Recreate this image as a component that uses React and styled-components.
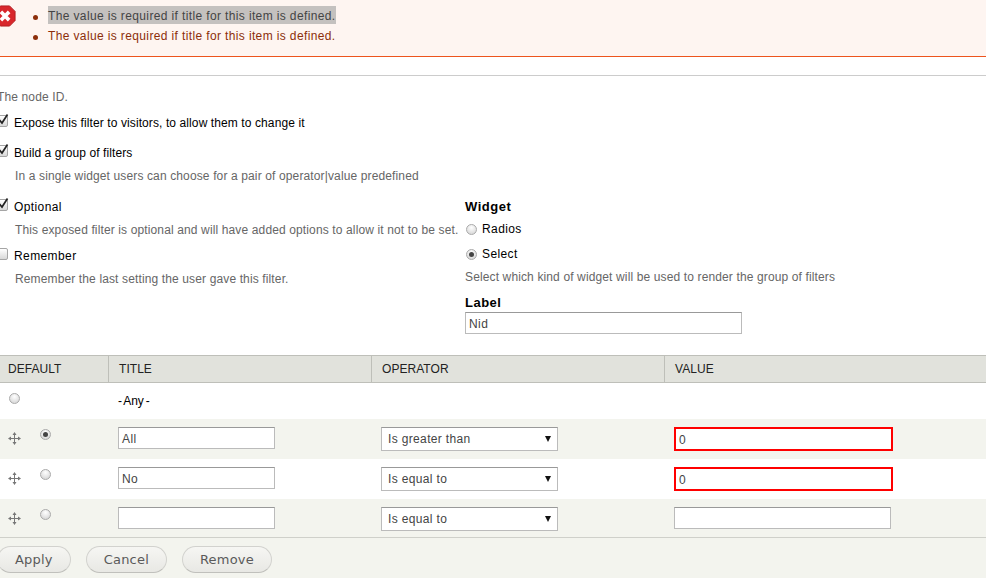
import React from 'react';
import styled, { createGlobalStyle } from 'styled-components';

const GlobalStyle = createGlobalStyle`
  html, body {
    margin: 0;
    padding: 0;
    background: #fff;
  }
  body {
    width: 986px;
    height: 578px;
    overflow: hidden;
    font-family: "Liberation Sans", Arial, sans-serif;
    font-size: 12px;
    letter-spacing: 0.4px;
    color: #000;
  }
`;

const Page = styled.div`
  width: 986px;
  height: 578px;
  overflow: hidden;
`;

const Messages = styled.div`
  box-sizing: border-box;
  height: 57px;
  background: #fef5f1;
  border-bottom: 1px solid #ed541d;
  display: flex;
  padding-top: 6px;
`;

const ErrorIconWrap = styled.div`
  width: 30px;
  margin-left: -6px;
  margin-top: -1px;
`;

const ErrorList = styled.ul`
  list-style: none;
  margin: 0;
  padding: 0 0 0 9px;
`;

const ErrorItem = styled.li`
  height: 20px;
  line-height: 18px;
  color: #8c2e0b;
  letter-spacing: 0.37px;
  display: flex;
  gap: 10px;
  align-items: flex-start;
  &::before {
    content: "";
    width: 5px;
    height: 5px;
    border-radius: 50%;
    background: #8c2e0b;
    margin-top: 9px;
  }
`;

const ErrorText = styled.span`
  display: inline-block;
  height: 18px;
  padding-top: 1px;
  box-sizing: border-box;
  background: ${p => (p.$selected ? '#c4c1bf' : 'transparent')};
  color: ${p => (p.$selected ? '#444' : 'inherit')};
`;

const Divider = styled.div`
  height: 1px;
  background: #ccc;
  margin-top: 18px;
`;

const Description = styled.div`
  color: #666;
  line-height: 16px;
  letter-spacing: 0.13px;
  white-space: nowrap;
  margin-left: ${p => p.$indent || 0}px;
  margin-top: ${p => p.$top || 0}px;
`;

const CheckRow = styled.div`
  display: flex;
  align-items: flex-start;
  height: 16px;
  line-height: 16px;
  margin-top: ${p => p.$top || 0}px;
  margin-left: -4px;
`;

const CheckLabel = styled.span`
  margin-left: 6px;
  letter-spacing: ${p => (p.$tight ? 0.1 : 0.4)}px;
`;

const Box = styled.span`
  position: relative;
  box-sizing: border-box;
  width: 12px;
  height: 12px;
  flex: none;
  border: 1px solid #a5a5a5;
  border-radius: 2px;
  background: linear-gradient(#fff, #d8d8d8);
  svg {
    position: absolute;
    left: 1px;
    top: -3px;
  }
`;

const Columns = styled.div`
  display: flex;
  margin-top: 15px;
`;

const LeftColumn = styled.div`
  width: 465px;
  flex: none;
`;

const RightColumn = styled.div`
  flex: 1;
`;

const FieldTitle = styled.div`
  font-weight: bold;
  font-size: 13px;
  line-height: 16px;
  letter-spacing: 0.5px;
  margin-top: ${p => p.$top || 0}px;
`;

const RadioRow = styled.div`
  display: flex;
  align-items: center;
  gap: 5px;
  height: 16px;
  line-height: 16px;
  margin-left: 1px;
  margin-top: ${p => p.$top || 0}px;
`;

const RadioDot = styled.span`
  box-sizing: border-box;
  display: inline-flex;
  align-items: center;
  justify-content: center;
  width: 11px;
  height: 11px;
  flex: none;
  border-radius: 50%;
  border: 1px solid #aaa;
  background: radial-gradient(circle at 50% 30%, #fff, #d0d0d0);
  &::after {
    content: "";
    display: ${p => (p.$on ? 'block' : 'none')};
    width: 5px;
    height: 5px;
    border-radius: 50%;
    background: #444;
  }
`;

const TextInput = styled.div`
  box-sizing: border-box;
  width: ${p => p.$width}px;
  height: ${p => (p.$error ? 24 : 22)}px;
  line-height: 22px;
  padding-left: 3px;
  background: #fff;
  color: #444;
  border: ${p => (p.$error ? '2px solid #f00' : '1px solid #bbb')};
  border-top-color: ${p => (p.$error ? '#f00' : '#999')};
  margin-top: ${p => p.$top || 0}px;
`;

const FakeSelect = styled.div`
  box-sizing: border-box;
  width: 177px;
  height: 24px;
  padding: 0 6px;
  display: flex;
  align-items: center;
  justify-content: space-between;
  background: #fff;
  color: #444;
  border: 1px solid #bbb;
  border-top-color: #999;
  letter-spacing: 0.35px;
`;

const Arrow = styled.span`
  width: 0;
  height: 0;
  border-left: 3px solid transparent;
  border-right: 3px solid transparent;
  border-top: 6px solid #111;
`;

const GroupTable = styled.div`
  margin-top: 21px;
`;

const HeadRow = styled.div`
  box-sizing: border-box;
  display: grid;
  grid-template-columns: 108px 263px 293px 1fr;
  height: 28px;
  background: #e1e2dc;
  border-top: 1px solid #bebfb9;
  border-bottom: 1px solid #bebfb9;
`;

const HeadCell = styled.div`
  box-sizing: border-box;
  padding-left: ${p => p.$pad || 10}px;
  line-height: 26px;
  letter-spacing: 0.05px;
  color: #222;
  border-left: ${p => (p.$first ? 'none' : '1px solid #bebfb9')};
`;

const BodyRow = styled.div`
  display: grid;
  grid-template-columns: 108px 263px 293px 1fr;
  height: ${p => p.$height || 40}px;
  background: ${p => (p.$odd ? '#f3f4ee' : '#fff')};
  align-items: start;
`;

const DefaultCell = styled.div`
  display: flex;
  align-items: flex-start;
  padding: 10px 0 0 ${p => p.$pad || 8}px;
  gap: 19px;
`;

const HandleSlot = styled.span`
  display: block;
  height: 13px;
  margin-top: 3px;
`;

const InputCell = styled.div`
  padding: 8px 0 0 10px;
`;

const AnyLabel = styled.div`
  padding: 10px 0 0 10px;
  line-height: 16px;
  letter-spacing: 0;
  word-spacing: -1.5px;
`;

const Actions = styled.div`
  box-sizing: border-box;
  display: flex;
  gap: 15px;
  height: 43px;
  padding-top: 8px;
  background: #f3f4ee;
  border-top: 1px solid #cfd0ca;
`;

const ActionButton = styled.div`
  box-sizing: border-box;
  height: 27px;
  line-height: 25px;
  padding: 0 17px;
  margin-left: ${p => p.$shift || 0}px;
  border: 1px solid #d2d2ce;
  border-bottom-color: #c0c0bc;
  border-radius: 14px;
  background: linear-gradient(#f6f6f3, #e8e8e4);
  color: #5a5a5a;
  font-family: "DejaVu Sans", sans-serif;
  font-size: 13px;
  letter-spacing: 0.2px;
`;

const Check = ({ checked }) => (
  <Box>
    {checked && (
      <svg width="12" height="13" viewBox="0 0 12 13">
        <path d="M1.5 7 L4 10 L9.5 1.5" fill="none" stroke="#222" strokeWidth="1.7" />
      </svg>
    )}
  </Box>
);

const ErrorIcon = () => (
  <svg width="22" height="22" viewBox="0 0 24 24">
    <polygon points="7,1 17,1 23,7 23,17 17,23 7,23 1,17 1,7" fill="#d8262b" stroke="#b01c20" />
    <path d="M7.5 7.5 L16.5 16.5 M16.5 7.5 L7.5 16.5" stroke="#fff" strokeWidth="4" />
  </svg>
);

const DragHandle = () => (
  <svg width="13" height="13" viewBox="0 0 13 13">
    <path d="M6.5 1 V12 M1 6.5 H12" stroke="#777" strokeWidth="1" fill="none" />
    <path d="M6.5 0 L4.5 3 H8.5 Z M6.5 13 L4.5 10 H8.5 Z M0 6.5 L3 4.5 V8.5 Z M13 6.5 L10 4.5 V8.5 Z" fill="#777" />
  </svg>
);

const rows = [
  { title: 'All', op: 'Is greater than', value: '0', on: true, error: true, odd: true, height: 40 },
  { title: 'No', op: 'Is equal to', value: '0', error: true, height: 40 },
  { title: '', op: 'Is equal to', value: '', odd: true, height: 38 },
];

export default function App() {
  return (
    <Page>
      <GlobalStyle />
      <Messages>
        <ErrorIconWrap><ErrorIcon /></ErrorIconWrap>
        <ErrorList>
          <ErrorItem><ErrorText $selected>The value is required if title for this item is defined.</ErrorText></ErrorItem>
          <ErrorItem><ErrorText>The value is required if title for this item is defined.</ErrorText></ErrorItem>
        </ErrorList>
      </Messages>
      <Divider />
      <Description $indent={-3} $top={13}>The node ID.</Description>
      <CheckRow $top={10}><Check checked /><CheckLabel $tight>Expose this filter to visitors, to allow them to change it</CheckLabel></CheckRow>
      <CheckRow $top={14}><Check checked /><CheckLabel $tight>Build a group of filters</CheckLabel></CheckRow>
      <Description $indent={15} $top={7}>In a single widget users can choose for a pair of operator|value predefined</Description>
      <Columns>
        <LeftColumn>
          <CheckRow><Check checked /><CheckLabel>Optional</CheckLabel></CheckRow>
          <Description $indent={15} $top={7}>This exposed filter is optional and will have added options to allow it not to be set.</Description>
          <CheckRow $top={10}><Check /><CheckLabel>Remember</CheckLabel></CheckRow>
          <Description $indent={15} $top={7}>Remember the last setting the user gave this filter.</Description>
        </LeftColumn>
        <RightColumn>
          <FieldTitle>Widget</FieldTitle>
          <RadioRow $top={6}><RadioDot />Radios</RadioRow>
          <RadioRow $top={9}><RadioDot $on />Select</RadioRow>
          <Description $top={7}>Select which kind of widget will be used to render the group of filters</Description>
          <FieldTitle $top={10}>Label</FieldTitle>
          <TextInput $width={277} $top={1}>Nid</TextInput>
        </RightColumn>
      </Columns>
      <GroupTable>
        <HeadRow>
          <HeadCell $first $pad={8}>DEFAULT</HeadCell>
          <HeadCell>TITLE</HeadCell>
          <HeadCell>OPERATOR</HeadCell>
          <HeadCell>VALUE</HeadCell>
        </HeadRow>
        <BodyRow $height={36}>
          <DefaultCell $pad={9}><RadioDot /></DefaultCell>
          <AnyLabel>- Any -</AnyLabel>
        </BodyRow>
        {rows.map((row, i) => (
          <BodyRow key={i} $odd={row.odd} $height={row.height}>
            <DefaultCell>
              <HandleSlot><DragHandle /></HandleSlot>
              <RadioDot $on={row.on} />
            </DefaultCell>
            <InputCell><TextInput $width={157}>{row.title}</TextInput></InputCell>
            <InputCell><FakeSelect>{row.op}<Arrow /></FakeSelect></InputCell>
            <InputCell><TextInput $width={row.error ? 219 : 217} $error={row.error}>{row.value}</TextInput></InputCell>
          </BodyRow>
        ))}
      </GroupTable>
      <Actions>
        <ActionButton $shift={-3}>Apply</ActionButton>
        <ActionButton>Cancel</ActionButton>
        <ActionButton>Remove</ActionButton>
      </Actions>
    </Page>
  );
}
